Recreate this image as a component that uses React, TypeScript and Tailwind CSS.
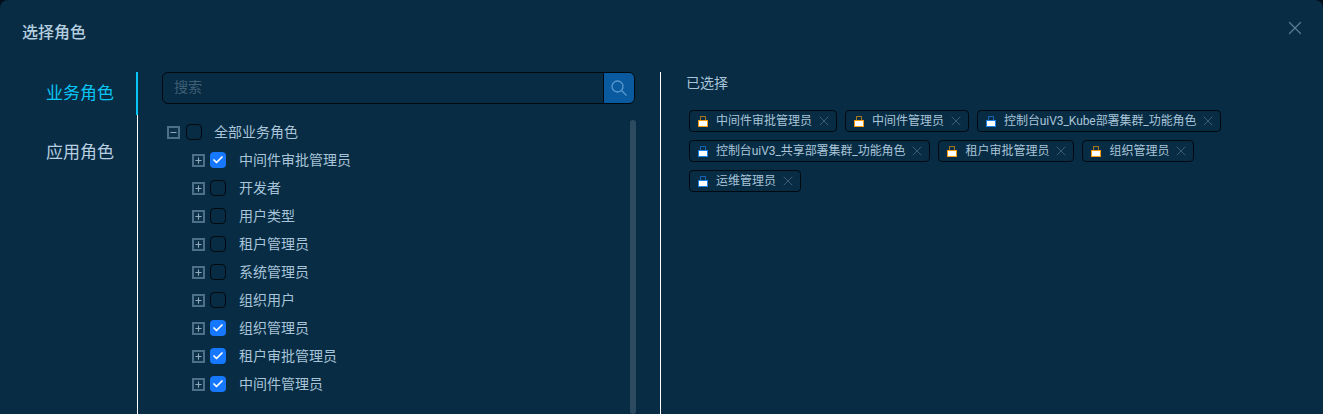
import { Plus, Minus, X, Check } from 'lucide-react';

const tree = [
  { name: '中间件审批管理员', checked: true },
  { name: '开发者', checked: false },
  { name: '用户类型', checked: false },
  { name: '租户管理员', checked: false },
  { name: '系统管理员', checked: false },
  { name: '组织用户', checked: false },
  { name: '组织管理员', checked: true },
  { name: '租户审批管理员', checked: true },
  { name: '中间件管理员', checked: true },
];

const tagRows = [
  [
    { name: '中间件审批管理员', kind: 'org' },
    { name: '中间件管理员', kind: 'org' },
    { name: '控制台uiV3_Kube部署集群_功能角色', kind: 'app' },
  ],
  [
    { name: '控制台uiV3_共享部署集群_功能角色', kind: 'app' },
    { name: '租户审批管理员', kind: 'org' },
    { name: '组织管理员', kind: 'org' },
  ],
  [{ name: '运维管理员', kind: 'app' }],
];

function Lock({ kind }: { kind: string }) {
  const color = kind === 'org' ? '#f59a0c' : '#1a7fe8';
  return (
    <svg width="10" height="12" viewBox="0 0 10 12" className="shrink-0">
      <path d="M2.5 6V1.5h5V6" fill="none" stroke={color} strokeOpacity="0.7" />
      <rect x="0.5" y="5.5" width="9" height="6" fill="#fff" stroke={color} />
    </svg>
  );
}

function Box({ checked }: { checked: boolean }) {
  return checked ? (
    <span className="flex h-4 w-4 shrink-0 items-center justify-center rounded-[4px] bg-[#1677ff]">
      <Check size={12} strokeWidth={3.5} className="text-white" />
    </span>
  ) : (
    <span className="block h-4 w-4 shrink-0 rounded-[4px] border border-[#000810]" />
  );
}

function Toggle({ open }: { open?: boolean }) {
  const Icon = open ? Minus : Plus;
  return (
    <span className="flex h-[13px] w-[13px] shrink-0 items-center justify-center border-2 border-[#4d7088] bg-[#0b3047]">
      <Icon size={9} strokeWidth={3} className="text-[#8fa9bb]" />
    </span>
  );
}

export default function App() {
  return (
    <div className="h-[414px] w-[1323px] overflow-hidden bg-[#010e19] font-['Roboto','Noto_Sans_CJK_SC',sans-serif]">
      <div className="h-full rounded-t-[8px] bg-[#072c44] text-[#a9c4d8]">
        <header className="flex h-[72px] items-start justify-between pl-[22px] pr-[17px] pt-[22px]">
          <h1 className="text-[16px] leading-[22px] font-medium text-[#b4cddf]">选择角色</h1>
          <X size={22} strokeWidth={1.3} className="mt-[-5px] text-[#587b92]" />
        </header>
        <div className="flex h-[342px]">
          <nav className="w-[138px] shrink-0 border-r border-white text-[17px]">
            <div className="relative flex h-[43px] items-center pl-[46px] text-[#08c5f5]">
              业务角色
              <span className="absolute right-[-1px] top-0 h-full w-[2px] bg-[#08c5f5]" />
            </div>
            <div className="mt-[17px] flex h-[43px] items-center pb-[1px] pl-[46px] text-[#b7cfe0]">应用角色</div>
          </nav>

          <section className="relative w-[523px] shrink-0 border-r border-white pl-[24px]">
            <div className="flex h-[32px] w-[473px] overflow-hidden rounded-[6px] border border-[#000810]">
              <div className="flex-1 pl-[11px] text-[14px] leading-[29px] text-[#3f5f75]">搜索</div>
              <button type="button" className="flex w-[31px] items-center justify-center border-l border-[#000810] bg-[#0a5a9f]">
                <svg width="16" height="16" viewBox="0 0 16 16" fill="none" stroke="#5a9bd0" strokeWidth="1.3">
                  <circle cx="6.5" cy="6.5" r="5.5" />
                  <path d="M10.5 10.5L15.5 15.5" />
                </svg>
              </button>
            </div>
            <div className="mt-[14px] pl-[5px] text-[14px]">
              <div className="flex h-[28px] items-center">
                <Toggle open />
                <span className="ml-[6px]"><Box checked={false} /></span>
                <span className="ml-[12px]">全部业务角色</span>
              </div>
              {tree.map((item) => (
                <div key={item.name} className="flex h-[28px] items-center pl-[25px]">
                  <Toggle />
                  <span className="ml-[5px]"><Box checked={item.checked} /></span>
                  <span className="ml-[13px]">{item.name}</span>
                </div>
              ))}
            </div>
            <div className="absolute right-[24px] top-[48px] h-[294px] w-[6px] rounded-full bg-[#2d4b60]" />
          </section>

          <section className="flex-1 pl-[25px]">
            <h2 className="text-[14px] leading-[22px]">已选择</h2>
            <div className="mt-[16px] flex flex-col gap-[8px] pl-[3px]">
              {tagRows.map((row, i) => (
                <div key={i} className="flex gap-[8px]">
                  {row.map((tag) => (
                    <span key={tag.name} className="flex h-[22px] items-center rounded-[4px] border border-[#000810] pl-[8px] pr-[4px] text-[12px]">
                      <Lock kind={tag.kind} />
                      <span className={tag.name.includes('uiV3') ? 'ml-[8px] tracking-[-0.07px]' : 'ml-[8px]'}>{tag.name}</span>
                      <X size={16} strokeWidth={1.2} className="ml-[4px] text-[#4b6a80]" />
                    </span>
                  ))}
                </div>
              ))}
            </div>
          </section>
        </div>
      </div>
    </div>
  );
}
